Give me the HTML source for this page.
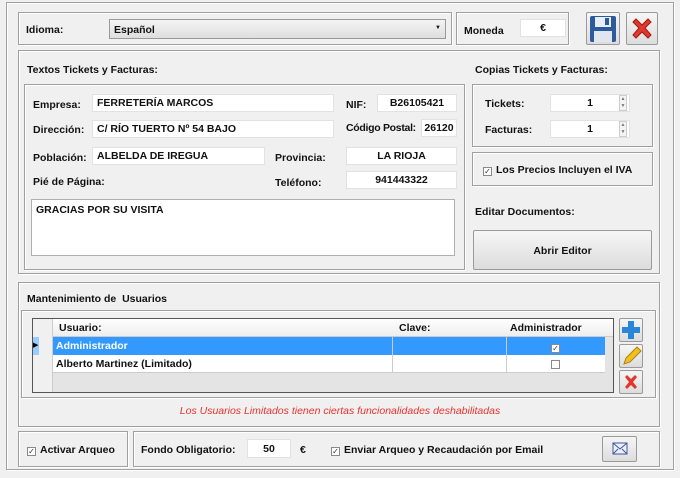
<!DOCTYPE html>
<html><head><meta charset="utf-8"><style>
*{box-sizing:border-box;margin:0;padding:0}
body{width:680px;height:478px;background:#f0f0f0;font-family:"Liberation Sans","DejaVu Sans",sans-serif;font-size:10.5px;font-weight:bold;color:#111;position:relative;overflow:hidden}
.a{position:absolute;white-space:nowrap}
.box{position:absolute;border:1px solid #a0a0a0;box-shadow:inset 1px 1px 0 #fff,1px 1px 0 #fff}
.in{position:absolute;background:#fff;border:1px solid #e2e2e2;font-size:10.5px;line-height:16px;padding-left:4px;white-space:nowrap}
.c{text-align:center;padding:0}
.btn{position:absolute;border:1px solid #9a9a9a;border-radius:2px;background:linear-gradient(#f6f6f6,#dcdcdc)}
.cb{display:inline-block;width:9px;height:9px;border:1px solid #8a8a8a;background:#fff;font-size:8px;line-height:8px;text-align:center;color:#336;vertical-align:-1px;margin-right:4px;font-weight:normal}
.sp{position:absolute;width:8px;height:16px;border:1px solid #ccc;background:#f4f4f4;font-size:5px;line-height:7px;text-align:center;color:#777;font-weight:normal}
</style></head><body>
<div class="box" style="left:6px;top:2px;width:668px;height:468px"></div>
<div class="box" style="left:18px;top:12px;width:434px;height:33px"></div>
<div class="a" style="left:26px;top:24px">Idioma:</div>
<div class="a" style="left:109px;top:19px;width:337px;height:20px;border:1px solid #9a9a9a;background:linear-gradient(#f4f4f4,#dedede);padding:4px 4px">Español<span style="position:absolute;right:4px;top:5px;font-size:6px">▼</span></div>
<div class="box" style="left:456px;top:12px;width:113px;height:33px"></div>
<div class="a" style="left:464px;top:25px">Moneda</div>
<div class="in c" style="left:520px;top:19px;width:46px;height:18px">€</div>
<div class="btn" style="left:586px;top:12px;width:34px;height:33px;padding:2px">
<svg width="28" height="28" viewBox="0 0 28 28"><rect x="1" y="1" width="26" height="26" rx="2" fill="#2c5a9c"/><rect x="6" y="2" width="16" height="10" fill="#e8eef6"/><rect x="16" y="3" width="4" height="7" fill="#2c5a9c"/><rect x="5" y="16" width="18" height="11" fill="#dfe6ee"/></svg></div>
<div class="btn" style="left:626px;top:12px;width:32px;height:33px;padding:3px 2px">
<svg width="26" height="26" viewBox="0 0 26 26"><path d="M4 6l3-3 6 6 6-6 3 3-6 6 6 7-3 3-6-6-6 6-3-3 6-7z" fill="#e0382c" stroke="#a01a10"/></svg></div>

<div class="box" style="left:18px;top:50px;width:642px;height:224px"></div>
<div class="a" style="left:27px;top:64px">Textos Tickets y Facturas:</div>
<div class="a" style="left:475px;top:64px">Copias Tickets y Facturas:</div>
<div class="box" style="left:24px;top:84px;width:441px;height:186px"></div>
<div class="a" style="left:33px;top:99px">Empresa:</div>
<div class="in" style="left:92px;top:94px;width:242px;height:18px">FERRETERÍA MARCOS</div>
<div class="a" style="left:346px;top:99px">NIF:</div>
<div class="in c" style="left:377px;top:94px;width:80px;height:18px">B26105421</div>
<div class="a" style="left:33px;top:124px">Dirección:</div>
<div class="in" style="left:92px;top:120px;width:242px;height:18px">C/ RÍO TUERTO Nº 54 BAJO</div>
<div class="a" style="left:346px;top:122px;letter-spacing:-0.3px">Código Postal:</div>
<div class="in c" style="left:421px;top:119px;width:36px;height:18px">26120</div>
<div class="a" style="left:33px;top:152px">Población:</div>
<div class="in" style="left:92px;top:147px;width:173px;height:18px">ALBELDA DE IREGUA</div>
<div class="a" style="left:275px;top:152px">Provincia:</div>
<div class="in c" style="left:346px;top:147px;width:111px;height:18px">LA RIOJA</div>
<div class="a" style="left:33px;top:176px">Pié de Página:</div>
<div class="a" style="left:275px;top:177px">Teléfono:</div>
<div class="in c" style="left:346px;top:171px;width:111px;height:18px">941443322</div>
<div class="in" style="left:31px;top:199px;width:424px;height:57px;border:1px solid #b0b0b0;padding-top:2px">GRACIAS POR SU VISITA</div>

<div class="box" style="left:472px;top:84px;width:181px;height:63px"></div>
<div class="a" style="left:485px;top:98px">Tickets:</div>
<div class="in c" style="left:550px;top:94px;width:80px;height:18px">1</div>
<div class="sp" style="left:619px;top:95px">▲<br>▼</div>
<div class="a" style="left:485px;top:124px">Facturas:</div>
<div class="in c" style="left:550px;top:120px;width:80px;height:18px">1</div>
<div class="sp" style="left:619px;top:121px">▲<br>▼</div>
<div class="box" style="left:472px;top:152px;width:181px;height:34px"></div>
<div class="a" style="left:483px;top:164px"><span class="cb">✓</span>Los Precios Incluyen el IVA</div>
<div class="a" style="left:475px;top:206px">Editar Documentos:</div>
<div class="btn" style="left:473px;top:230px;width:179px;height:40px;text-align:center;line-height:40px">Abrir Editor</div>

<div class="box" style="left:18px;top:282px;width:642px;height:145px"></div>
<div class="a" style="left:27px;top:293px">Mantenimiento de&nbsp; Usuarios</div>
<div class="box" style="left:21px;top:310px;width:635px;height:88px"></div>
<div class="a" style="left:32px;top:318px;width:582px;height:75px;border:1px solid #555;background:#e4e4e4">
 <div class="a" style="left:0;top:0;width:20px;height:73px;background:#f0f0f0;border-right:1px solid #ccc"></div>
 <div class="a" style="left:20px;top:0;width:560px;height:18px;background:linear-gradient(#fff,#eee);border-bottom:1px solid #ccc"></div>
 <div class="a" style="left:26px;top:3px">Usuario:</div>
 <div class="a" style="left:366px;top:3px">Clave:</div>
 <div class="a" style="left:477px;top:3px">Administrador</div>
 <div class="a" style="left:20px;top:18px;width:552px;height:18px;background:#3399ff"></div>
 <div class="a" style="left:0;top:18px;width:6px;height:18px;background:#99ccff;font-size:7px;line-height:18px;color:#000">▶</div>
 <div class="a" style="left:23px;top:21px;color:#fff">Administrador</div>
 <div class="a" style="left:20px;top:36px;width:552px;height:18px;background:#fff;border-bottom:1px solid #ccc"></div>
 <div class="a" style="left:23px;top:39px">Alberto Martinez (Limitado)</div>
 <div class="a" style="left:359px;top:18px;width:1px;height:36px;background:#ccc"></div>
 <div class="a" style="left:473px;top:18px;width:1px;height:36px;background:#ccc"></div>
 <div class="a" style="left:518px;top:22px"><span class="cb">✓</span></div>
 <div class="a" style="left:518px;top:40px"><span class="cb"></span></div>
</div>
<div class="btn" style="left:619px;top:318px;width:24px;height:24px"><svg width="22" height="22"><path d="M8 2h6v6h6v6h-6v6h-6v-6h-6v-6h6z" fill="#2a86d6"/></svg></div>
<div class="btn" style="left:619px;top:344px;width:24px;height:24px"><svg width="22" height="22"><path d="M4 19l2-6 11-11 4 4-11 11z" fill="#f0c020" stroke="#b08010"/></svg></div>
<div class="btn" style="left:619px;top:370px;width:24px;height:24px"><svg width="22" height="22"><path d="M5 6l2-2 4 4 4-4 2 2-4 5 4 5-2 2-4-4-4 4-2-2 4-5z" fill="#e0382c"/></svg></div>
<div class="a" style="left:0;top:405px;width:680px;text-align:center;color:#e8332c;font-style:italic;font-weight:normal">Los Usuarios Limitados tienen ciertas funcionalidades deshabilitadas</div>

<div class="box" style="left:18px;top:431px;width:110px;height:36px"></div>
<div class="a" style="left:27px;top:444px"><span class="cb">✓</span>Activar Arqueo</div>
<div class="box" style="left:133px;top:431px;width:527px;height:36px"></div>
<div class="a" style="left:141px;top:444px">Fondo Obligatorio:</div>
<div class="in c" style="left:247px;top:439px;width:44px;height:19px;line-height:18px">50</div>
<div class="a" style="left:300px;top:444px">€</div>
<div class="a" style="left:331px;top:444px"><span class="cb">✓</span>Enviar Arqueo y Recaudación por Email</div>
<div class="btn" style="left:602px;top:436px;width:35px;height:26px;padding:5px 9px"><svg width="16" height="14"><rect x="1" y="1" width="14" height="11" fill="#eef" stroke="#3a5a9a"/><path d="M1 1l7 6 7-6M1 12l5-5M15 12l-5-5" fill="none" stroke="#3a5a9a"/></svg></div>
</body></html>
